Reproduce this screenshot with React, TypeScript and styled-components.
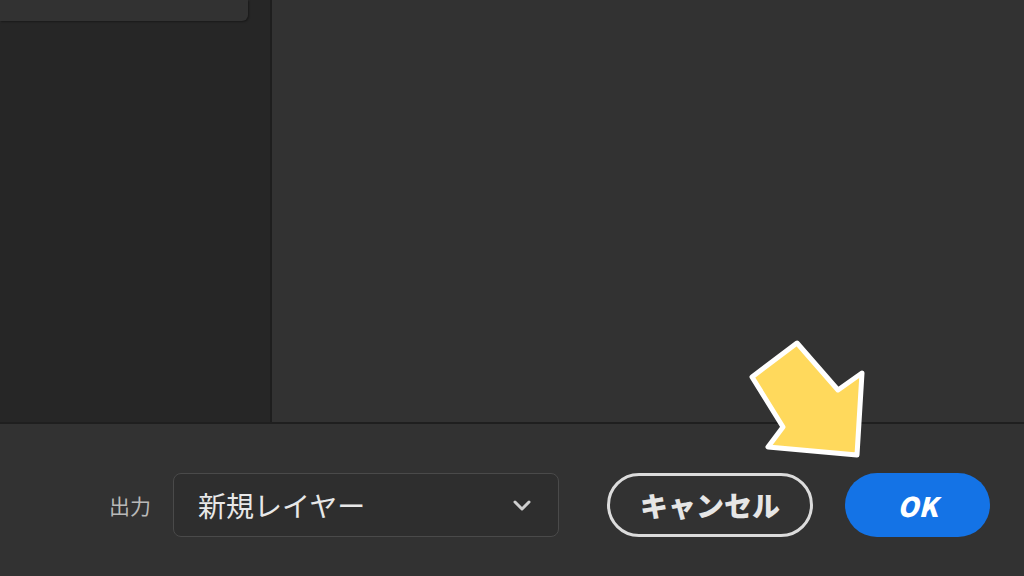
import React from 'react';
import styled, { createGlobalStyle } from 'styled-components';

const GlobalStyle = createGlobalStyle`
  html, body {
    margin: 0;
    padding: 0;
    width: 1024px;
    height: 576px;
    overflow: hidden;
    background: #323232;
    font-family: 'Noto Sans CJK JP', 'Noto Sans', sans-serif;
  }
`;

const Screen = styled.div`
  position: relative;
  width: 1024px;
  height: 576px;
  display: flex;
  flex-direction: column;
  background: #323232;
`;

const Workspace = styled.div`
  height: 422px;
  display: flex;
  border-bottom: 2px solid #1f1f1f;
`;

const SidePanel = styled.div`
  width: 272px;
  background: #262626;
  border-right: 2px solid #1e1e1e;
  padding-right: 22px;
  box-sizing: border-box;
`;

const PresetCard = styled.div`
  height: 21px;
  background: #323232;
  border-radius: 0 0 6px 0;
  box-shadow: 1px 1px 2px rgba(0, 0, 0, 0.35);
`;

const Preview = styled.div`
  flex: 1;
  background: #323232;
`;

const Footer = styled.div`
  flex: 1;
  display: flex;
  align-items: flex-start;
  padding: 49px 34px 0 109px;
  background: #323232;
`;

const FieldLabel = styled.span`
  height: 64px;
  display: flex;
  align-items: center;
  font-size: 21px;
  color: #b9b9b9;
  margin-right: 22px;
`;

const Select = styled.div`
  width: 386px;
  height: 64px;
  box-sizing: border-box;
  display: flex;
  align-items: center;
  justify-content: space-between;
  padding: 0 26px 0 24px;
  border: 1.5px solid #4a4a4a;
  border-radius: 8px;
  background: #2e2e2e;
  font-size: 28px;
  color: #e8e8e8;
`;

const Buttons = styled.div`
  margin-left: auto;
  display: flex;
  gap: 32px;
`;

const PillButton = styled.div<{ $primary?: boolean }>`
  height: 64px;
  box-sizing: border-box;
  display: flex;
  align-items: center;
  justify-content: center;
  border-radius: 32px;
  font-weight: 900;
  color: ${(p) => (p.$primary ? '#ffffff' : '#e6e6e6')};
  background: ${(p) => (p.$primary ? '#1473e6' : 'transparent')};
  border: ${(p) => (p.$primary ? 'none' : '3px solid #dcdcdc')};
  width: ${(p) => (p.$primary ? '145px' : '206px')};
  font-size: ${(p) => (p.$primary ? '27px' : '28px')};
  font-style: ${(p) => (p.$primary ? 'italic' : 'normal')};
`;

const Pointer = styled.svg`
  position: absolute;
  left: 740px;
  top: 330px;
`;

const Chevron = () => (
  <svg width="20" height="14" viewBox="0 0 20 14">
    <path d="M3 4 L10 11 L17 4" fill="none" stroke="#cfcfcf" strokeWidth="3" strokeLinecap="round" strokeLinejoin="round" />
  </svg>
);

const App = () => (
  <Screen>
    <GlobalStyle />
    <Workspace>
      <SidePanel>
        <PresetCard />
      </SidePanel>
      <Preview />
    </Workspace>
    <Footer>
      <FieldLabel>出力</FieldLabel>
      <Select>
        <span>新規レイヤー</span>
        <Chevron />
      </Select>
      <Buttons>
        <PillButton>キャンセル</PillButton>
        <PillButton $primary>OK</PillButton>
      </Buttons>
    </Footer>
    <Pointer width="140" height="140" viewBox="740 330 140 140">
      <path
        d="M797 343 L752 377 L783 427 L768 447 L857 455 L862 373 L838 390 Z"
        fill="#ffd95c"
        stroke="#ffffff"
        strokeWidth="5"
        strokeLinejoin="round"
      />
    </Pointer>
  </Screen>
);

export default App;
